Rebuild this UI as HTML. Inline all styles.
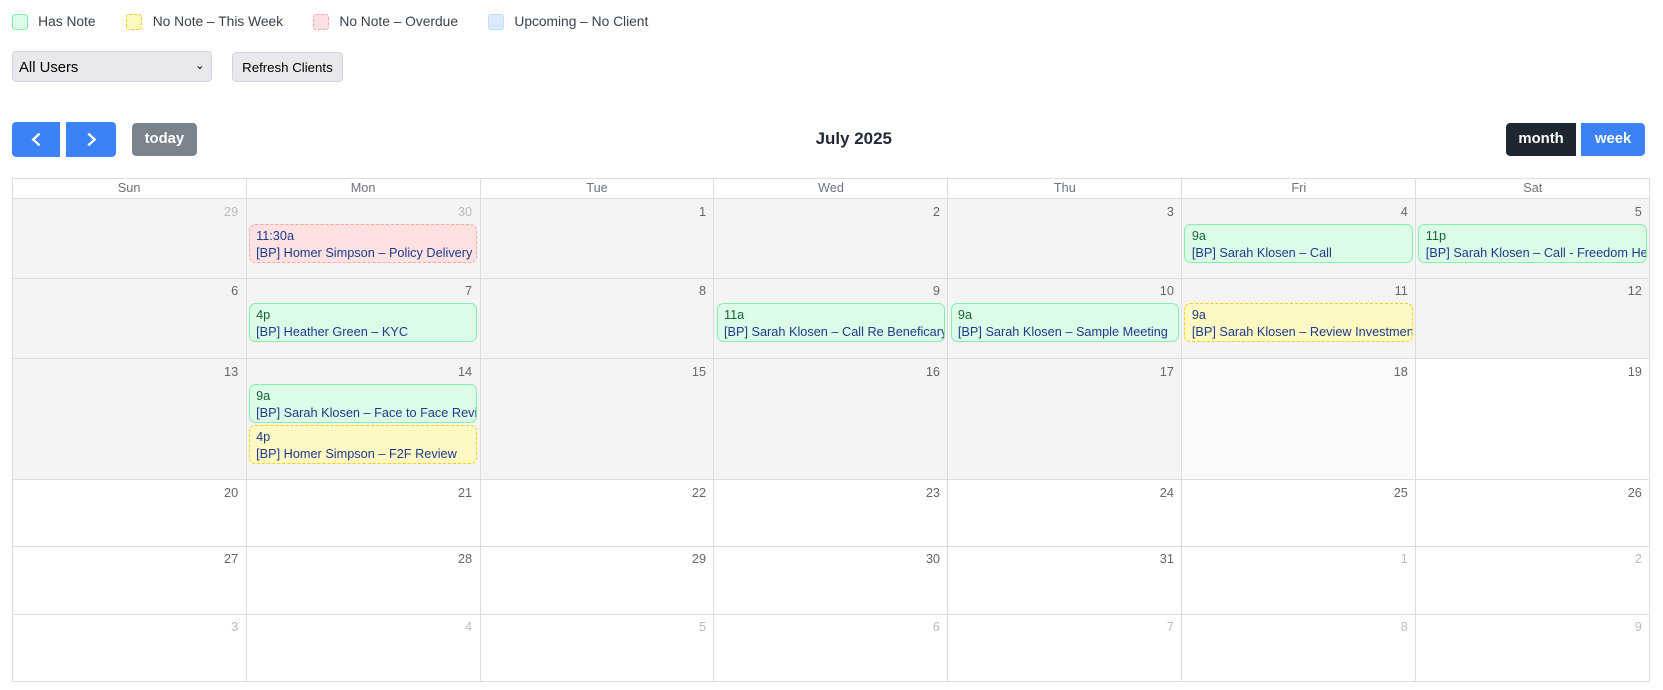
<!DOCTYPE html>
<html><head><meta charset="utf-8"><style>
*{box-sizing:border-box}
html,body{margin:0;background:#fff;width:1663px;height:690px;overflow:hidden}
#w{zoom:1.0606;position:relative;width:1568px;height:650px;font-family:"Liberation Sans",sans-serif;color:#333}
.leg{position:absolute;top:13px;font-size:13px;color:#374151}
.leg i{position:absolute;left:0;top:0;width:15px;height:15px;border-radius:3px}
.leg span{position:absolute;left:25px;top:0;white-space:nowrap;line-height:16px}
.btn{position:absolute;border-radius:4px;color:#fff;font-size:14px;font-weight:bold;text-align:center}
table{position:absolute;left:11px;top:168px;width:1545px;border-collapse:collapse;table-layout:fixed}
td,th{border:1px solid #ddd;padding:0;vertical-align:top}
th{height:19px;font-weight:normal;font-size:12px;color:#6b7280;line-height:17px}
td{background:#f4f4f4;position:relative}
td.w{background:#fff}
td.t{background:#f9fafb}
.n{text-align:right;font-size:12px;color:#666;padding:4px 7px 0 0;height:23px}
.o{color:#bbb}
.e{margin:0 2px 2px 2px;height:37px;border-radius:6px;font-size:12px;padding:3px 6px;line-height:16px;white-space:nowrap;overflow:hidden;color:#1e3a8a}
.g{background:#dcfce7;border:1px solid #86efac}
.g b{color:#166534}
.y{background:#fef9c3;border:1px dashed #facc15}
.r{background:#fee2e2;border:1px dashed #fca5a5}
.e b{font-weight:normal;display:block}
</style></head><body><div id="w">
<div class="leg" style="left:11px"><i style="background:#dcfce7;border:1px solid #86efac"></i><span>Has Note</span></div>
<div class="leg" style="left:119px"><i style="background:#fef9c3;border:1px dashed #facc15"></i><span>No Note – This Week</span></div>
<div class="leg" style="left:295px"><i style="background:#fee2e2;border:1px dashed #fca5a5"></i><span>No Note – Overdue</span></div>
<div class="leg" style="left:460px"><i style="background:#dbeafe;border:1px solid #bfdbfe"></i><span>Upcoming – No Client</span></div>
<div style="position:absolute;left:11px;top:48px;width:189px;height:29px;background:#e9e9ed;border:1px solid #d1d5db;border-radius:4px;font-size:14px;color:#000;padding:8px 0 0 6px">All Users<span style="position:absolute;right:6px;top:6px;font-size:11px">&#8964;</span></div>
<div style="position:absolute;left:219px;top:49px;width:104px;height:28px;background:#e9e9ed;border:1px solid #d1d5db;border-radius:4px;font-size:12.5px;color:#000;text-align:center;line-height:28px">Refresh Clients</div>
<div class="btn" style="left:11px;top:115px;width:46px;height:33px;background:#3b82f6;border-radius:4px 0 0 4px"><svg width="46" height="33"><path d="M26 11 L20 16.5 L26 22" fill="none" stroke="#fff" stroke-width="2.2"/></svg></div>
<div class="btn" style="left:62px;top:115px;width:47px;height:33px;background:#3b82f6;border-radius:0 4px 4px 0"><svg width="47" height="33"><path d="M21 11 L27 16.5 L21 22" fill="none" stroke="#fff" stroke-width="2.2"/></svg></div>
<div class="btn" style="left:124px;top:116px;width:62px;height:31px;background:#7a828c;line-height:31px">today</div>
<div style="position:absolute;left:705px;width:200px;top:122px;text-align:center;font-size:16px;font-weight:bold;color:#1f2937">July 2025</div>
<div class="btn" style="left:1420px;top:116px;width:66px;height:31px;background:#1e2630;border-radius:4px 0 0 4px;line-height:31px">month</div>
<div class="btn" style="left:1491px;top:116px;width:60px;height:31px;background:#3b82f6;border-radius:0 4px 4px 0;line-height:31px">week</div>
<table>
<tr><th>Sun</th><th>Mon</th><th>Tue</th><th>Wed</th><th>Thu</th><th>Fri</th><th>Sat</th></tr>
<tr style="height:75px"><td><div class="n o">29</div></td><td><div class="n o">30</div><div class="e r"><b>11:30a</b>[BP] Homer Simpson – Policy Delivery</div></td><td><div class="n">1</div></td><td><div class="n">2</div></td><td><div class="n">3</div></td><td><div class="n">4</div><div class="e g"><b>9a</b>[BP] Sarah Klosen – Call</div></td><td><div class="n">5</div><div class="e g"><b>11p</b>[BP] Sarah Klosen – Call - Freedom Health</div></td></tr>
<tr style="height:76px"><td><div class="n">6</div></td><td><div class="n">7</div><div class="e g"><b>4p</b>[BP] Heather Green – KYC</div></td><td><div class="n">8</div></td><td><div class="n">9</div><div class="e g"><b>11a</b>[BP] Sarah Klosen – Call Re Beneficary</div></td><td><div class="n">10</div><div class="e g"><b>9a</b>[BP] Sarah Klosen – Sample Meeting</div></td><td><div class="n">11</div><div class="e y"><b>9a</b>[BP] Sarah Klosen – Review Investments</div></td><td><div class="n">12</div></td></tr>
<tr style="height:114px"><td><div class="n">13</div></td><td><div class="n">14</div><div class="e g"><b>9a</b>[BP] Sarah Klosen – Face to Face Review</div><div class="e y"><b>4p</b>[BP] Homer Simpson – F2F Review</div></td><td><div class="n">15</div></td><td><div class="n">16</div></td><td><div class="n">17</div></td><td class="t"><div class="n">18</div></td><td class="w"><div class="n">19</div></td></tr>
<tr style="height:63px"><td class="w"><div class="n">20</div></td><td class="w"><div class="n">21</div></td><td class="w"><div class="n">22</div></td><td class="w"><div class="n">23</div></td><td class="w"><div class="n">24</div></td><td class="w"><div class="n">25</div></td><td class="w"><div class="n">26</div></td></tr>
<tr style="height:64px"><td class="w"><div class="n">27</div></td><td class="w"><div class="n">28</div></td><td class="w"><div class="n">29</div></td><td class="w"><div class="n">30</div></td><td class="w"><div class="n">31</div></td><td class="w"><div class="n o">1</div></td><td class="w"><div class="n o">2</div></td></tr>
<tr style="height:63px"><td class="w"><div class="n o">3</div></td><td class="w"><div class="n o">4</div></td><td class="w"><div class="n o">5</div></td><td class="w"><div class="n o">6</div></td><td class="w"><div class="n o">7</div></td><td class="w"><div class="n o">8</div></td><td class="w"><div class="n o">9</div></td></tr>
</table>
</div></body></html>
